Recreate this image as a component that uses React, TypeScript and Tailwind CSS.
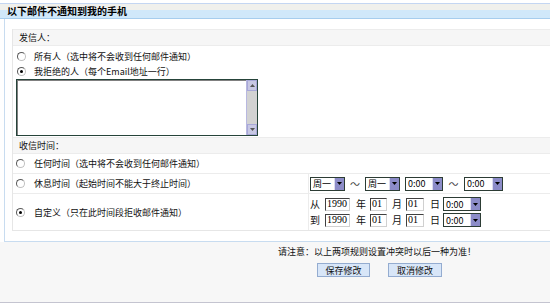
import React from "react";

const FONT = { fontFamily: '"Noto Sans CJK SC", "Noto Sans", sans-serif' };

function Radio({ checked }: { checked?: boolean }) {
  return (
    <span className="relative inline-flex h-[9px] w-[9px] shrink-0 items-center justify-center rounded-full border border-t-[#5a5a5a] border-l-[#5a5a5a] border-r-[#c0c0c0] border-b-[#c0c0c0] bg-white">
      {checked && <span className="h-[3px] w-[3px] rounded-full bg-black" />}
    </span>
  );
}

function Select({ value, w }: { value: string; w: string }) {
  return (
    <div className={`flex h-[14px] items-stretch border border-[#2c3c34] bg-white ${w}`}>
      <div className="flex flex-1 items-center whitespace-nowrap pl-[2px] text-[9px] leading-none text-black">{value}</div>
      <div className="flex w-[10px] items-center justify-center border-l border-[#dcdcf0] bg-[#8c8cc8]">
        <svg width="5" height="3" viewBox="0 0 5 3">
          <path d="M0 0h5L2.5 3z" fill="#000" />
        </svg>
      </div>
    </div>
  );
}

function Field({ value, w }: { value: string; w: string }) {
  return (
    <div
      className={`flex h-[13px] items-center border border-t-[#404040] border-l-[#404040] border-r-[#d0d0d0] border-b-[#d0d0d0] bg-white pl-[1px] text-[10px] leading-none text-black ${w}`}
      style={{ fontFamily: '"Liberation Serif", serif' }}
    >
      {value}
    </div>
  );
}

function SectionHead({ label }: { label: string }) {
  return (
    <div className="flex h-[17px] items-center whitespace-nowrap border-y border-[#ececec] bg-[#f6f6f6] pl-[6px] text-[9px] leading-none">
      {label}
    </div>
  );
}

export default function App() {
  return (
    <div className="h-[303px] w-[550px] overflow-hidden whitespace-nowrap bg-white text-[#111]" style={FONT}>
      {/* title */}
      <div className="mt-[3px] border-t border-[#c4d6f2]" />
      <div className="flex h-[15px] items-center border-b border-[#a6cdee] bg-gradient-to-b from-[#f0f0ec] from-45% to-[#d0e8fa] to-45% pl-[7px] text-[10px] font-bold leading-none text-black">
        以下邮件不通知到我的手机
      </div>

      {/* main panel */}
      <div className="ml-[4px] border-b border-l border-[#c8dcf0] pb-[10px] pl-[7px] pt-[10px]">
        <div className="border-b border-l border-[#e6e6e6]">
          <SectionHead label="发信人：" />
          <div className="pb-[1px] pl-[3px] pt-[3px] text-[9px] leading-none">
            <div className="flex h-[15px] items-center gap-[8px] pl-[1px]">
              <Radio />
              <span>所有人（选中将不会收到任何邮件通知）</span>
            </div>
            <div className="flex h-[15px] items-center gap-[8px] pl-[1px]">
              <Radio checked />
              <span>我拒绝的人（每个Email地址一行）</span>
            </div>
            <div className="flex h-[57px] w-[242px] border border-[#26443a] bg-white">
              <div className="flex-1 border-l border-t border-[#808080]" />
              <div className="flex w-[11px] flex-col border-l border-[#b8b8e0] bg-[#d2d2d2]">
                <div className="flex h-[11px] items-center justify-center border border-[#a8a8d8] bg-[#c8c8e4]">
                  <svg width="5" height="3" viewBox="0 0 5 3">
                    <path d="M0 3h5L2.5 0z" fill="#555" />
                  </svg>
                </div>
                <div className="flex-1" />
                <div className="flex h-[11px] items-center justify-center border border-[#a8a8d8] bg-[#c8c8e4]">
                  <svg width="5" height="3" viewBox="0 0 5 3">
                    <path d="M0 0h5L2.5 3z" fill="#555" />
                  </svg>
                </div>
              </div>
            </div>
          </div>

          <SectionHead label="收信时间：" />
          <div className="flex h-[20px] items-center gap-[9px] border-b border-[#ececec] pl-[3px] text-[9px] leading-none">
            <Radio />
            <span>任何时间（选中将不会收到任何邮件通知）</span>
          </div>
          <div className="flex h-[20px] border-b border-[#ececec] text-[9px] leading-none">
            <div className="flex w-[295px] items-center gap-[9px] pl-[3px]">
              <Radio />
              <span>休息时间（起始时间不能大于终止时间）</span>
            </div>
            <div className="flex flex-1 items-center border-l border-[#ececec] pl-[1px]">
              <Select value="周一" w="w-[35px]" />
              <span className="w-[20px] text-center text-[10px] text-[#444]">～</span>
              <Select value="周一" w="w-[35px]" />
              <div className="ml-[5px]">
                <Select value="0:00" w="w-[38px]" />
              </div>
              <span className="w-[21px] text-center text-[10px] text-[#444]">～</span>
              <Select value="0:00" w="w-[39px]" />
            </div>
          </div>
          <div className="flex h-[36px] text-[9px] leading-none">
            <div className="flex w-[295px] items-center gap-[9px] pl-[3px]">
              <Radio checked />
              <span>自定义（只在此时间段拒收邮件通知）</span>
            </div>
            <div className="flex flex-1 flex-col justify-center gap-[2px] border-l border-[#ececec] pl-[1px]">
              {["从", "到"].map((p) => (
                <div key={p} className="flex h-[14px] items-center">
                  <span className="w-[12px] text-[10px]">{p}</span>
                  <div className="ml-[3px]">
                    <Field value="1990" w="w-[25px]" />
                  </div>
                  <span className="ml-[6px] w-[12px] text-[10px]">年</span>
                  <div className="ml-[2px]">
                    <Field value="01" w="w-[17px]" />
                  </div>
                  <span className="ml-[5px] w-[12px] text-[10px]">月</span>
                  <div className="ml-[2px]">
                    <Field value="01" w="w-[18px]" />
                  </div>
                  <span className="ml-[6px] w-[12px] text-[10px]">日</span>
                  <div className="ml-[1px]">
                    <Select value="0:00" w="w-[38px]" />
                  </div>
                </div>
              ))}
            </div>
          </div>
        </div>
      </div>

      {/* footer */}
      <div className="h-[61px] border-b border-[#c4c4d0] bg-[#f7f7f7] pl-[278px] pt-[3px] text-[9px] leading-none">
        <div className="flex h-[13px] items-center">请注意：以上两项规则设置冲突时以后一种为准！</div>
        <div className="ml-[39px] mt-[5px] flex gap-[18px]">
          <button className="flex h-[14px] w-[53px] items-center justify-center border border-[#94acd0] bg-[#d8e6f8] text-[9px] leading-none">
            保存修改
          </button>
          <button className="flex h-[14px] w-[54px] items-center justify-center border border-[#94acd0] bg-[#d8e6f8] text-[9px] leading-none">
            取消修改
          </button>
        </div>
      </div>
    </div>
  );
}
